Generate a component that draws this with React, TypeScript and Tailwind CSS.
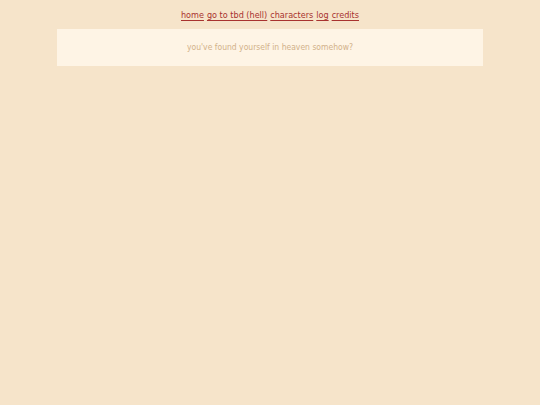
const links = ['home', 'go to tbd (hell)', 'characters', 'log', 'credits'];

export default function App() {
  return (
    <div className="min-h-[405px] bg-[#f6e4ca] font-['DejaVu_Sans_Condensed','DejaVu_Sans',sans-serif]">
      <nav className="flex justify-center gap-[3px] pt-[9px] text-[9px] leading-[13px]">
        {links.map((l) => (
          <a key={l} href="#" className="text-[#a8322f] underline underline-offset-[2px]">
            {l}
          </a>
        ))}
      </nav>
      <main className="mx-auto mt-[7px] flex h-[37px] w-[426px] items-center justify-center bg-[#fef4e5]">
        <p className="text-[8.5px] text-[#d2b189]">you've found yourself in heaven somehow?</p>
      </main>
    </div>
  );
}
